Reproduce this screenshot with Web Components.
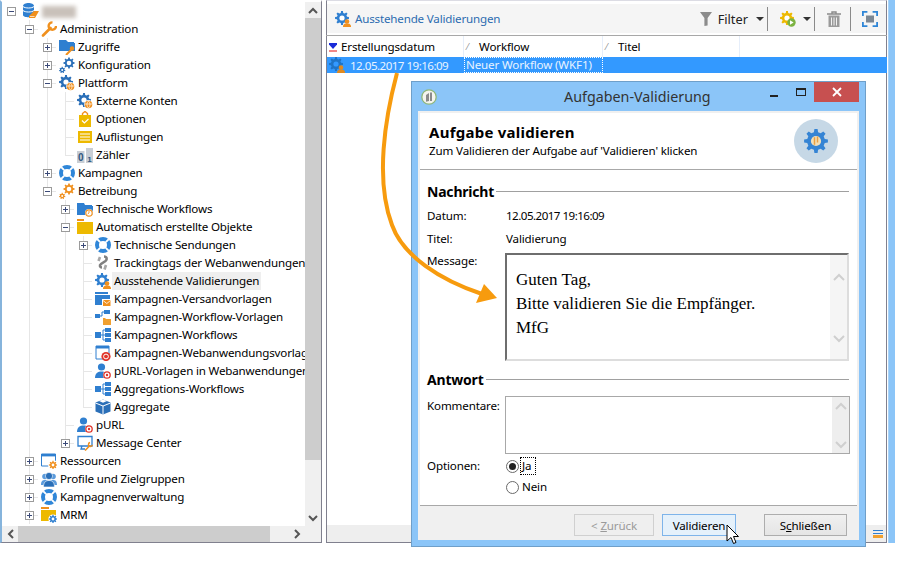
<!DOCTYPE html>
<html lang="de">
<head>
<meta charset="utf-8">
<title>Aufgaben-Validierung</title>
<style>
  html, body { margin: 0; background: #fff; }
  body { width: 908px; height: 562px; overflow: hidden; position: relative; font: 11.6px "Noto Sans", "Liberation Sans", sans-serif; color: #000; }
</style>
</head>
<body>
<app-frame>
  <tree-view></tree-view>
  <list-pane></list-pane>
</app-frame>
<task-dialog></task-dialog>
<flow-arrow></flow-arrow>

<script>
// Zahnrad als Polygon
function gear(cx, cy, ro, ri, n, fill, hole, holeR) {
    const pts = [];
    const step = Math.PI * 2 / n;
    for (let i = 0; i < n; i++) {
        const a = i * step - Math.PI / 2;
        [[-.3, ri], [-.17, ro], [.17, ro], [.3, ri]].forEach(([o, r]) => {
            pts.push((cx + Math.cos(a + o * step) * r).toFixed(2) + ',' + (cy + Math.sin(a + o * step) * r).toFixed(2));
        });
    }
    return `<polygon points="${pts.join(' ')}" fill="${fill}"/><circle cx="${cx}" cy="${cy}" r="${holeR}" fill="${hole}"/>`;
}

const BLUE = '#2f7fd0', DBLUE = '#2a6fb8', ORANGE = '#f0901e', YELLOW = '#edb900';
const userBadge = (c = ORANGE) => `<circle cx="12" cy="10.5" r="2.3" fill="${c}"/><path d="M8 16c0-3 1.5-3.6 4-3.6s4 .6 4 3.6z" fill="${c}"/>`;
const atBadge = `<circle cx="12" cy="12" r="4" fill="#fff"/><circle cx="12" cy="12" r="3.2" fill="none" stroke="#e0352b" stroke-width="1.3"/><circle cx="12" cy="12" r="1.2" fill="#e0352b"/>`;
const globeBadge = `<circle cx="11.5" cy="11.5" r="4.4" fill="#fff"/><circle cx="11.5" cy="11.5" r="3.8" fill="${ORANGE}"/><path d="M8 11h7M11.5 8c-2 2-2 5 0 7M11.5 8c2 2 2 5 0 7" stroke="#fff" stroke-width=".7" fill="none"/>`;
const folderBlue = `<path d="M0 2h7l1 2h7v3H0z" fill="${BLUE}"/><path d="M0 5h16v9H0z" fill="${BLUE}"/>`;
const ring = `<circle cx="8" cy="8" r="6" fill="none" stroke="#2f86d8" stroke-width="4"/><path d="M2.2 2.2l3 3M13.8 2.2l-3 3M2.2 13.8l3-3M13.8 13.8l-3-3" stroke="#fff" stroke-width="1.9"/>`;

const ICONS = {
    root: `<path d="M0 3c0-4 11-4 11 0v9c0 3-11 3-11 0z" fill="${BLUE}"/><path d="M0 3.500c2 2 9 2 11 0M0 7.500c2 2 9 2 11 0" stroke="#fff" fill="none"/><path d="M6 13l5-5h5l-4 7H6z" fill="${ORANGE}"/><path d="M7 13.500h4.500" stroke="#fff" stroke-width=".7"/>`,
    wrench: `<path d="M2 14.5L9.5 7" stroke="${ORANGE}" stroke-width="2.6" stroke-linecap="round"/><path d="M11.5 1.4A3.7 3.7 0 1 0 15 5" fill="none" stroke="${ORANGE}" stroke-width="2.4"/>`,
    folderKey: `<path d="M0 1h7l2 2h6v3H0z" fill="${BLUE}"/><path d="M0 4h16v8H0z" fill="${BLUE}"/><circle cx="13" cy="9.5" r="2.2" fill="${ORANGE}"/><path d="M12 11l-5 5" stroke="${ORANGE}" stroke-width="2"/>`,
    gears: gear(10, 6, 5.6, 4.2, 8, DBLUE, '#fff', 2.3) + gear(3.2, 13, 3.2, 2.3, 7, DBLUE, '#fff', 1),
    gearsOrange: gear(10, 6, 5.6, 4.2, 8, ORANGE, '#fff', 2.3) + gear(3.2, 13, 3.2, 2.3, 7, ORANGE, '#fff', 1),
    gearGlobe: gear(7, 7, 7, 5.2, 8, DBLUE, '#fff', 2.6) + globeBadge,
    gearUser: gear(7, 7, 7, 5.2, 8, BLUE, '#fff', 2.6) + userBadge(),
    clipboard: `<path d="M2 4h12v12H2z" fill="${YELLOW}"/><path d="M5.5 4V2.5L8 .5l2.5 2V4" fill="none" stroke="${ORANGE}" stroke-width="1.4"/><path d="M5 9.5l2.4 2.4L11.5 8" fill="none" stroke="#fff" stroke-width="1.2"/>`,
    list: `<path d="M1 2h14v12H1z" fill="${YELLOW}"/><path d="M3 5h10M3 8h10M3 11h10" stroke="#fff" stroke-width="1.2"/>`,
    counter: `<rect x="0" y="4" width="7.5" height="12" fill="#c9ced5"/><rect x="9" y="1" width="7" height="15" fill="#c9ced5"/><text x="3.8" y="14" font-size="10" font-weight="700" text-anchor="middle" fill="#2f5780" font-family="Liberation Sans, sans-serif">0</text><text x="12.5" y="14.5" font-size="8" font-weight="700" text-anchor="middle" fill="#2f5780" font-family="Liberation Sans, sans-serif">1</text>`,
    ring,
    folderClock: folderBlue + `<circle cx="12" cy="12" r="4" fill="#fff"/><circle cx="12" cy="12" r="3.2" fill="#fff" stroke="${ORANGE}" stroke-width="1.2"/><path d="M12 10v2l-1.3 1" stroke="${ORANGE}" fill="none" stroke-width=".9"/>`,
    folderYellow: `<path d="M0 0h7v2H0z" fill="${ORANGE}"/><path d="M0 3h16v12H0z" fill="${YELLOW}"/>`,
    tracking: `<path d="M9 1.5c3 0 3.5 3 1.5 4.5L6 9c-2 1.5-1 3.5 1 3.5" fill="none" stroke="#808080" stroke-width="2.6"/><path d="M5 2L3.5 6M11 10l-1.5 4.5" stroke="#a8a8a8" stroke-width="2.6"/>`,
    folderMail: `<path d="M0 1h13v2H0z" fill="${BLUE}"/><path d="M0 4h15v10H0z" fill="${BLUE}"/><path d="M7 8h9v7H7z" fill="#fff"/><path d="M8 9h7.5v6H8z" fill="${ORANGE}"/><path d="M8 9.5l3.8 3 3.7-3" fill="none" stroke="#fff" stroke-width=".8"/>`,
    wfFolder: `<path d="M0 5h5v4H0zM9 1h6v4H9z" fill="${BLUE}"/><path d="M5 7h2M7 3v4M7 3h2" stroke="${BLUE}" fill="none"/><path d="M8 9h2l1 1h5v6H8z" fill="#f0a030"/>`,
    wfBlue: `<path d="M0 5h6v6H0zM10 1h6v4h-6zM10 6h6v4h-6zM10 11h6v4h-6z" fill="${BLUE}"/><path d="M6 8h2M8 3v10M8 3h2M8 8h2M8 13h2" stroke="${BLUE}" fill="none"/>`,
    windowAt: `<path d="M1 1h13v13H1z" fill="#fff" stroke="${BLUE}" stroke-width="1"/><path d="M1 1h13v2.5H1z" fill="${BLUE}"/><circle cx="11" cy="11.5" r="4.6" fill="#e0352b"/><circle cx="11" cy="11.5" r="2.4" fill="none" stroke="#fff" stroke-width="1"/>`,
    userAt: `<circle cx="6.5" cy="4" r="3.6" fill="${BLUE}"/><path d="M0 15c0-5 3-6.6 6.5-6.6S12 10 12 15z" fill="${BLUE}"/>` + atBadge,
    cube: `<path d="M8 .5l7.5 3v9L8 15.5.5 12.5v-9z" fill="${DBLUE}"/><path d="M.5 4L8 7l7.5-3M8 7v8.5" stroke="#fff" fill="none"/><path d="M8 .5l4 1.6L8 3.7 4 2.1z" fill="#fff"/>`,
    monitor: `<path d="M1 1.5h14v9.5H1z" fill="#fff" stroke="${BLUE}" stroke-width="1.3"/><path d="M5 11l-1 3h4" fill="none" stroke="${BLUE}" stroke-width="1.3"/><path d="M8 15.5l5-5" stroke="${ORANGE}" stroke-width="1.6"/><path d="M13 7.5a2 2 0 1 0 2.4 2.4" fill="none" stroke="${ORANGE}" stroke-width="1.4"/>`,
    windowGear: `<path d="M.5 1h14v12H.5z" fill="#fff" stroke="${BLUE}"/><path d="M.5 1h14v2.4H.5z" fill="${BLUE}"/><circle cx="12" cy="12" r="5" fill="#fff"/>` + gear(12, 12, 4.2, 3, 8, ORANGE, '#fff', 1.4),
    users: `<circle cx="4" cy="5.5" r="2.8" fill="#5b9bdc"/><circle cx="12" cy="5.5" r="2.8" fill="#5b9bdc"/><path d="M0 14c0-4 1.5-5 4-5s4 1 4 5zM8 14c0-4 1.5-5 4-5s4 1 4 5z" fill="#5b9bdc"/><circle cx="8" cy="5" r="3.6" fill="${DBLUE}" stroke="#fff" stroke-width=".6"/><path d="M2.500 16c0-5 2.500-6.500 5.500-6.500s5.500 1.500 5.500 6.500z" fill="${DBLUE}" stroke="#fff" stroke-width=".6"/>`,
    folderGear: `<path d="M0 0h8v2H0z" fill="${ORANGE}"/><path d="M0 3h15v11H0z" fill="${YELLOW}"/><circle cx="12" cy="12" r="4.6" fill="#fff"/>` + gear(12, 12, 4.2, 3, 8, BLUE, '#fff', 1.4),
    gearPlay: gear(7, 7, 7, 5.2, 8, YELLOW, '#fff', 2.6) + `<circle cx="11.5" cy="11.5" r="4.2" fill="#7cb342"/><path d="M10 9.2v4.6l3.600-2.300z" fill="#fff"/>`,
    gearSel: gear(7, 7, 7, 5.2, 8, '#1f74c6', '#3399ff', 2.6) + userBadge('#e08a20'),
    funnel: `<path d="M0 1h12L7.600 7v7.500L4.400 15V7z" fill="#8c8c8c"/>`,
    trash: `<path d="M0 3h14M5 3V1h4v2" stroke="#8a8a8a" fill="none" stroke-width="1.4"/><path d="M1.500 4.500h11V16h-11z" fill="#9a9a9a"/><path d="M4.500 6.500v8M7 6.500v8M9.500 6.500v8" stroke="#f2f2f2"/>`,
    fullscreen: `<path d="M.9 5V.9h4.500M10.600 .9h4.500V5M15.100 11v4.100h-4.500M5.400 15.100H.9V11" fill="none" stroke="#2f86d8" stroke-width="1.8"/><rect x="4" y="4.500" width="8" height="7" fill="#7c8793"/>`,
    appIcon: `<circle cx="8" cy="8" r="7.2" fill="#f4f4ee" stroke="#8fb779" stroke-width="1.3"/><path d="M5 6l3-2v8l-3 .8zM9 3.500h2v8.500H9z" fill="#8a8a8a"/>`
};

class UiIcon extends HTMLElement {
    connectedCallback() {
        const size = this.getAttribute('size') || 16;
        const root = this.shadowRoot || this.attachShadow({ mode: 'open' });
        root.innerHTML = `
            <style>
                :host { display: block; flex: none; width: ${size}px; height: ${size}px; }
                svg { display: block; }
            </style>
            <svg width="${size}" height="${size}" viewBox="0 0 16 16">${ICONS[this.getAttribute('name')] || ''}</svg>
        `;
    }
}
customElements.define('ui-icon', UiIcon);

class AppFrame extends HTMLElement {
    constructor() {
        super();
        this.attachShadow({ mode: 'open' });
        this.shadowRoot.innerHTML = `
            <style>
                :host { display: flex; width: 895px; height: 543px; gap: 4px; }
                .strip { width: 6px; margin-left: -3px; background: #8bc5f8; border-left: 1px solid #a9d3f8; }
            </style>
            <slot></slot>
            <div class="strip"></div>
        `;
    }
}
customElements.define('app-frame', AppFrame);

class TreeRow extends HTMLElement {
    connectedCallback() {
        const depth = +this.getAttribute('depth');
        const exp = this.getAttribute('exp');
        const lines = (this.getAttribute('lines') || '').split(',');
        const own = this.getAttribute('own');
        let cells = '';
        for (let c = 0; c < depth; c++) {
            cells += `<span class="cell ${lines[c] === '1' ? 'v' : ''}"></span>`;
        }
        const ownCls = own === 'full' ? 'h' : own === 'half' ? 'vh h' : '';
        const box = exp ? `<span class="box">${exp === 'plus' ? '<i class="pv"></i>' : ''}<i class="ph"></i></span>` : '';
        this.attachShadow({ mode: 'open' }).innerHTML = `
            <style>
                :host { display: flex; align-items: center; height: 18px; white-space: nowrap; --l: #e6e6e6; }
                .cell { flex: none; width: 18px; height: 18px; display: flex; align-items: center; justify-content: center; background-repeat: no-repeat; }
                .v { background-image: linear-gradient(var(--l), var(--l)); background-size: 1px 100%; background-position: 9px 0; }
                .h { background-image: linear-gradient(var(--l), var(--l)), linear-gradient(var(--l), var(--l)); background-size: 1px 100%, 12px 1px; background-position: 9px 0, 9px 9px; }
                .vh.h { background-size: 1px 50%, 12px 1px; }
                .box { box-sizing: border-box; width: 9px; height: 9px; border: 1px solid #9b9b9b; background: #fff; display: flex; align-items: center; justify-content: center; position: relative; }
                .ph { display: block; width: 5px; height: 1px; background: #3b4a78; }
                .pv { position: absolute; left: 3px; top: 1px; width: 1px; height: 5px; background: #3b4a78; }
                ui-icon { margin-left: 3px; }
                .label { margin-left: 1px; padding: 0 2px; height: 18px; line-height: 18px; letter-spacing: var(--ls, 0); }
                :host([selected]) .label { background: #efefef; }
            </style>
            ${cells}
            <span class="cell ${ownCls}">${box}</span>
            <ui-icon name="${this.getAttribute('icon')}"></ui-icon>
            <span class="label"><slot></slot></span>
        `;
    }
}
customElements.define('tree-row', TreeRow);

const TREE = [
    [0, 'minus', 'root', ''],
    [1, 'minus', 'wrench', 'Administration'],
    [2, 'plus', 'folderKey', 'Zugriffe'],
    [2, 'plus', 'gears', 'Konfiguration'],
    [2, 'minus', 'gearGlobe', 'Plattform'],
    [3, '', 'gearGlobe', 'Externe Konten'],
    [3, '', 'clipboard', 'Optionen'],
    [3, '', 'list', 'Auflistungen'],
    [3, '', 'counter', 'Zähler'],
    [2, 'plus', 'ring', 'Kampagnen'],
    [2, 'minus', 'gearsOrange', 'Betreibung'],
    [3, 'plus', 'folderClock', 'Technische Workflows'],
    [3, 'minus', 'folderYellow', 'Automatisch erstellte Objekte'],
    [4, 'plus', 'ring', 'Technische Sendungen'],
    [4, '', 'tracking', 'Trackingtags der Webanwendungen'],
    [4, '', 'gearUser', 'Ausstehende Validierungen', true],
    [4, '', 'folderMail', 'Kampagnen-Versandvorlagen'],
    [4, '', 'wfFolder', 'Kampagnen-Workflow-Vorlagen'],
    [4, '', 'wfBlue', 'Kampagnen-Workflows'],
    [4, '', 'windowAt', 'Kampagnen-Webanwendungsvorlagen'],
    [4, '', 'userAt', 'pURL-Vorlagen in Webanwendungen'],
    [4, '', 'wfBlue', 'Aggregations-Workflows'],
    [4, '', 'cube', 'Aggregate'],
    [3, '', 'userAt', 'pURL'],
    [3, 'plus', 'monitor', 'Message Center'],
    [1, 'plus', 'windowGear', 'Ressourcen'],
    [1, 'plus', 'users', 'Profile und Zielgruppen'],
    [1, 'plus', 'ring', 'Kampagnenverwaltung'],
    [1, 'plus', 'folderGear', 'MRM']
];

class TreeView extends HTMLElement {
    constructor() {
        super();
        this.attachShadow({ mode: 'open' });
        // kommt ein weiterer Knoten auf dieser Ebene?
        const hasNext = (i, c) => {
            for (let j = i + 1; j < TREE.length; j++) {
                if (TREE[j][0] < c) return false;
                if (TREE[j][0] === c) return true;
            }
            return c === 1;
        };
        const rows = TREE.map((r, i) => {
            const [depth, exp, icon, label, sel] = r;
            const lines = [];
            for (let c = 0; c < depth; c++) lines.push(c > 0 && hasNext(i, c) ? 1 : 0);
            const own = depth === 0 ? '' : hasNext(i, depth) ? 'full' : 'half';
            const text = label || '<span class="blur"></span>';
            return `<tree-row depth="${depth}" exp="${exp}" icon="${icon}" lines="${lines}" own="${own}" ${sel ? 'selected' : ''}>${text}</tree-row>`;
        }).join('');
        this.shadowRoot.innerHTML = `
            <style>
                :host { display: grid; flex: none; width: 322px; grid-template-columns: 303px 16px; grid-template-rows: 524px 16px; box-sizing: border-box; height: 543px; border-left: 2px solid #86b4dc; border-top: 2px solid #fff; border-right: 1px solid #80808e; border-bottom: 1px solid #80808e; background: #fff; --ls: -.18px; }
                .rows { overflow: hidden; min-width: 0; }
                .blur { display: inline-block; width: 34px; height: 12px; vertical-align: middle; background: #c9c1ba; filter: blur(2px); }
                .sb { background: #f0f0f0; display: flex; }
                .sb.y { flex-direction: column; }
                .arrow { flex: none; width: 16px; height: 16px; display: flex; align-items: center; justify-content: center; }
                .thumb { background: #cdcdcd; }
                .y .thumb { height: 442px; }
                .x .thumb { width: 252px; }
                .gap { flex: 1; }
                .corner { background: #f0f0f0; }
            </style>
            <div class="rows">${rows}</div>
            <div class="sb y">
                <span class="arrow"><svg width="10" height="7"><path d="M1 6l4-4 4 4" fill="none" stroke="#555" stroke-width="2"/></svg></span>
                <div class="thumb"></div><div class="gap"></div>
                <span class="arrow"><svg width="10" height="7"><path d="M1 1l4 4 4-4" fill="none" stroke="#555" stroke-width="2"/></svg></span>
            </div>
            <div class="sb x">
                <span class="arrow"><svg width="7" height="10"><path d="M6 1L2 5l4 4" fill="none" stroke="#555" stroke-width="2"/></svg></span>
                <div class="thumb"></div><div class="gap"></div>
                <span class="arrow"><svg width="7" height="10"><path d="M1 1l4 4-4 4" fill="none" stroke="#555" stroke-width="2"/></svg></span>
            </div>
            <div class="corner"></div>
        `;
    }
}
customElements.define('tree-view', TreeView);

class ToolBar extends HTMLElement {
    constructor() {
        super();
        this.attachShadow({ mode: 'open' }).innerHTML = `
            <style>
                :host { display: flex; align-items: center; height: 29px; padding: 0 8px; background: #f5f5f5; flex: none; letter-spacing: -.18px; }
                .title { color: #2c6cb0; margin-left: 4px; flex: 1; }
                .sep { width: 1px; height: 24px; background: #8a8a8a; margin: 0 12px; }
                .caret { width: 0; height: 0; border: 4px solid transparent; border-top: 4px solid #333; border-bottom: 0; }
                .filter { margin: 0 8px 0 6px; letter-spacing: 0; font-size: 12.8px; color: #222; }
                .c1 { margin-right: -9px; }
                .c2 { margin-left: 7px; margin-right: -9px; }
                .fun { width: 12px; height: 15px; overflow: hidden; }
            </style>
            <ui-icon name="gearUser"></ui-icon>
            <span class="title">Ausstehende Validierungen</span>
            <ui-icon class="fun" name="funnel" size="16"></ui-icon>
            <span class="filter">Filter</span>
            <span class="caret c1"></span><span class="sep"></span>
            <ui-icon name="gearPlay"></ui-icon><span class="caret c2"></span><span class="sep"></span>
            <ui-icon name="trash"></ui-icon><span class="sep" style="margin:0 11px 0 7px"></span>
            <ui-icon name="fullscreen"></ui-icon>
        `;
    }
}
customElements.define('tool-bar', ToolBar);

class ListPane extends HTMLElement {
    constructor() {
        super();
        this.attachShadow({ mode: 'open' }).innerHTML = `
            <style>
                :host { display: flex; flex: none; width: 561px; flex-direction: column; box-sizing: border-box; height: 543px; padding-top: 3px; border: 1px solid #80808e; border-top: 1px solid #dcdce4; background: #fff; }
                .list { flex: 1; margin: 2px -1px 0; border-top: 1px solid #a8a8a8; padding-left: 1px; letter-spacing: -.15px; }
                .grid { display: grid; grid-template-columns: 137px 139px 137px 1fr; }
                .hd { height: 21px; display: flex; align-items: center; border-right: 1px solid #e6eefa; box-sizing: border-box; }
                .hd:last-child { border-right: 0; }
                .mark { width: 8px; margin: 0 4px 0 3px; color: #888; font-size: 9px; line-height: 9px; }
                .sort { margin: 0 4px 0 2px; width: 8px; height: 10px; display: block; flex: none; }
                .sel { background: #3399ff; color: #e8f3ff; height: 16px; }
                .sel .cell { height: 16px; line-height: 15px; white-space: nowrap; box-sizing: border-box; }
                .cell.first { display: flex; align-items: center; padding-left: 2px; }
                .first span { margin-left: 5px; letter-spacing: -.53px; }
                .focus { outline: 1px dotted #fff; outline-offset: -1px; padding-left: 2px; }
                .status { flex: none; height: 17px; background: #eee; display: flex; align-items: center; justify-content: flex-end; padding-right: 3px; }
                .burger { width: 10px; height: 8px; background: linear-gradient(#2f7fd0 0 1px, transparent 1px 3px, #2f7fd0 3px 4px, transparent 4px 5px, #f0a030 5px 8px); }
            </style>
            <tool-bar></tool-bar>
            <div class="list">
                <div class="grid">
                    <div class="hd"><svg class="sort" viewBox="0 0 8 10"><path d="M0 1h8v1.500L4 7 0 2.500z" fill="#1a2bd8"/><path d="M0 9h8" stroke="#e01010"/></svg>Erstellungsdatum</div>
                    <div class="hd"><span class="mark">⁄</span>Workflow</div>
                    <div class="hd"><span class="mark">⁄</span>Titel</div>
                    <div class="hd"></div>
                </div>
                <div class="grid sel">
                    <div class="cell first"><ui-icon name="gearSel"></ui-icon><span>12.05.2017 19:16:09</span></div>
                    <div class="cell focus">Neuer Workflow (WKF1)</div>
                    <div class="cell"></div>
                    <div class="cell"></div>
                </div>
            </div>
            <div class="status"><span class="burger"></span></div>
        `;
    }
}
customElements.define('list-pane', ListPane);

class SectionHead extends HTMLElement {
    constructor() {
        super();
        this.attachShadow({ mode: 'open' }).innerHTML = `
            <style>
                :host { display: flex; align-items: center; height: 20px; font-weight: 700; font-size: 14px; letter-spacing: -.2px; }
                .rule { flex: 1; height: 1px; background: #a0a0a0; margin-left: 2px; }
            </style>
            <slot></slot><span class="rule"></span>
        `;
    }
}
customElements.define('section-head', SectionHead);

class ScrollBox extends HTMLElement {
    constructor() {
        super();
        this.attachShadow({ mode: 'open' }).innerHTML = `
            <style>
                :host { display: flex; box-sizing: border-box; width: 100%; }
                .txt { flex: 1; padding: 13px 0 0 9px; font: 17px/24px "Liberation Serif", serif; letter-spacing: 0; }
                .bar { width: 17px; display: flex; flex-direction: column; justify-content: space-between; align-items: center; background: var(--bar, #f5f5f5); padding: var(--pad, 18px 0 16px); box-sizing: border-box; }
                svg { display: block; }
            </style>
            <div class="txt"><slot></slot></div>
            <div class="bar">
                <svg width="12" height="8"><path d="M1 7l5-5 5 5" fill="none" stroke="#cfcfcf" stroke-width="2"/></svg>
                <svg width="12" height="8"><path d="M1 1l5 5 5-5" fill="none" stroke="#cfcfcf" stroke-width="2"/></svg>
            </div>
        `;
    }
}
customElements.define('scroll-box', ScrollBox);

class RadioOpt extends HTMLElement {
    constructor() {
        super();
        this.attachShadow({ mode: 'open' }).innerHTML = `
            <style>
                :host { display: flex; align-items: center; height: 16px; }
                .r { box-sizing: border-box; width: 13px; height: 13px; border-radius: 50%; border: 1px solid #6a6a6a; margin-left: 1px; display: flex; align-items: center; justify-content: center; background: #fff; }
                :host([checked]) .r::after { content: ''; width: 7px; height: 7px; border-radius: 50%; background: #222; }
                .t { margin-left: 2px; padding: 0 1px; line-height: 16px; box-sizing: border-box; }
                :host([focused]) .t { outline: 1px dotted #000; padding-right: 4px; }
            </style>
            <span class="r"></span><span class="t"><slot></slot></span>
        `;
    }
}
customElements.define('radio-opt', RadioOpt);

class TaskDialog extends HTMLElement {
    constructor() {
        super();
        this.attachShadow({ mode: 'open' }).innerHTML = `
            <style>
                :host { position: absolute; left: 411px; top: 81px; width: 455px; height: 466px; box-sizing: border-box; border: 1px solid #6f9fc9; background: #8bc5f8; display: flex; flex-direction: column; letter-spacing: -.15px; }
                .title { flex: none; height: 29px; display: flex; align-items: flex-start; padding-left: 9px; position: relative; }
                .title ui-icon { margin-top: 7px; }
                .title b { position: absolute; left: 152px; top: 5px; font-weight: 400; font-size: 14.3px; color: #333; letter-spacing: 0; }
                .ctrls { margin-left: auto; margin-right: 6px; display: flex; align-items: flex-start; }
                .min { width: 8px; height: 2px; background: #222; margin: 13px 18px 0 0; }
                .max { box-sizing: border-box; width: 10px; height: 8px; border: 1px solid #222; border-top-width: 2px; margin: 6px 8px 0 0; }
                .close { width: 45px; height: 20px; background: #c75050; display: flex; align-items: center; justify-content: center; }
                .body { flex: 1; margin: 0 6px 6px 6px; border: 2px solid #f0f0f0; background: #fff; display: flex; flex-direction: column; min-height: 0; }
                header { flex: none; height: 56px; border-bottom: 1px solid #a8a8a8; display: flex; align-items: center; padding: 0 19px 0 9px; }
                header .h { flex: 1; }
                header h1 { margin: 0; font-size: 15px; line-height: 20px; font-weight: 700; letter-spacing: .25px; }
                header p { margin: 0; line-height: 18px; }
                .circle { width: 44px; height: 44px; border-radius: 50%; background: #c6d8e6; display: flex; align-items: center; justify-content: center; margin-top: -1px; }
                main { flex: 1; padding: 11px 8px 0 7px; }
                .row { display: grid; grid-template-columns: 78px 1fr; }
                .row.t { height: 23px; align-items: center; }
                .row.t span + span { margin-left: 1px; }
                .d { letter-spacing: -.53px; }
                .lab { line-height: 16px; }
                .msg { height: 108px; box-sizing: border-box; border: 2px solid; border-color: #6e6e6e #ddd #ddd #6e6e6e; }
                .cmt { height: 58px; box-sizing: border-box; border: 1px solid #a8a8a8; width: 345px; --bar: #eee; --pad: 5px 0 4px; }
                footer { flex: none; height: 33px; border-top: 1px solid #a8a8a8; background: #f0f0f0; display: flex; justify-content: flex-end; padding: 8px 10px 0 0; box-sizing: border-box; }
                .btn { box-sizing: border-box; height: 22px; display: flex; align-items: center; justify-content: center; border: 1px solid #adadad; background: linear-gradient(#f0f0f0, #e5e5e5); }
                .off { width: 80px; border-color: #d0d0d0; background: #efefef; color: #9a9a9a; margin-right: 8px; }
                .hot { width: 74px; border-color: #7eb4ea; background: #e5f1fb; margin-right: 28px; }
                .sch { width: 83px; }
                .cursor { position: absolute; left: 314px; top: 442px; }
            </style>
            <div class="title">
                <ui-icon name="appIcon"></ui-icon>
                <b>Aufgaben-Validierung</b>
                <div class="ctrls">
                    <span class="min"></span><span class="max"></span>
                    <span class="close"><svg width="10" height="10"><path d="M1 1l8 8M9 1l-8 8" stroke="#fff" stroke-width="1.8"/></svg></span>
                </div>
            </div>
            <div class="body">
                <header>
                    <div class="h">
                        <h1>Aufgabe validieren</h1>
                        <p>Zum Validieren der Aufgabe auf 'Validieren' klicken</p>
                    </div>
                    <div class="circle"><svg width="24" height="24" viewBox="0 0 16 16">${gear(8, 8, 8, 6, 8, '#3584d4', '#f2dfb8', 3.4)}<path d="M7 5.500v5M9 5v4" stroke="#eaa040" stroke-width="1" fill="none"/></svg></div>
                </header>
                <main>
                    <section-head>Nachricht</section-head>
                    <div class="row t" style="margin-top:3px"><span class="lab">Datum:</span><span class="d">12.05.2017 19:16:09</span></div>
                    <div class="row t"><span class="lab">Titel:</span><span>Validierung</span></div>
                    <div class="row" style="margin-top:3px">
                        <span class="lab">Message:</span>
                        <scroll-box class="msg">Guten Tag,<br>Bitte validieren Sie die Empfänger.<br>MfG</scroll-box>
                    </div>
                    <section-head style="margin-top:8px">Antwort</section-head>
                    <div class="row" style="margin-top:7px">
                        <span class="lab" style="margin-top:2px">Kommentare:</span>
                        <scroll-box class="cmt"></scroll-box>
                    </div>
                    <div class="row" style="margin-top:4px"><span class="lab">Optionen:</span><radio-opt checked focused>Ja</radio-opt></div>
                    <div class="row" style="margin-top:5px"><span></span><radio-opt>Nein</radio-opt></div>
                </main>
                <footer>
                    <span class="btn off"><span>&lt; <u>Z</u>urück</span></span>
                    <span class="btn hot">Validieren</span>
                    <span class="btn sch"><span>S<u>c</u>hließen</span></span>
                </footer>
            </div>
            <svg class="cursor" width="14" height="22" viewBox="0 0 14 22"><path d="M1 1v16l4-3.500 2.500 6 2.500-1-2.500-6H12.500z" fill="#fff" stroke="#000" stroke-width="1"/></svg>
        `;
    }
}
customElements.define('task-dialog', TaskDialog);

class FlowArrow extends HTMLElement {
    constructor() {
        super();
        this.attachShadow({ mode: 'open' }).innerHTML = `
            <style>
                :host { position: absolute; left: 0; top: 0; pointer-events: none; }
                svg { display: block; }
            </style>
            <svg width="908" height="562">
                <path d="M397 73C385 118 375 180 392 225C403 256 440 280 482 294" fill="none" stroke="#f79b0e" stroke-width="4"/>
                <path d="M497 298L484 284L476 303z" fill="#f79b0e"/>
            </svg>
        `;
    }
}
customElements.define('flow-arrow', FlowArrow);
</script>
</body>
</html>
